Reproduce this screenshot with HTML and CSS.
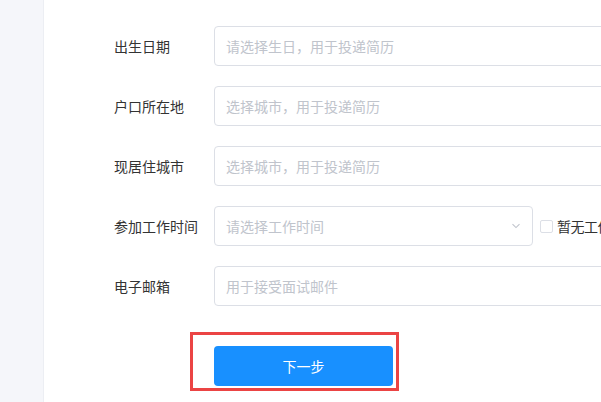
FILE: index.html
```html
<!DOCTYPE html>
<html lang="zh-CN">
<head>
<meta charset="utf-8">
<title>表单</title>
<link rel="stylesheet" href="styles.css">
</head>
<body>
<div class="page">
  <aside class="sidebar"></aside>
  <main class="main">
    <div class="form-row">
      <div class="label">出生日期</div>
      <div class="input">请选择生日，用于投递简历</div>
    </div>
    <div class="form-row">
      <div class="label">户口所在地</div>
      <div class="input">选择城市，用于投递简历</div>
    </div>
    <div class="form-row">
      <div class="label">现居住城市</div>
      <div class="input">选择城市，用于投递简历</div>
    </div>
    <div class="form-row">
      <div class="label">参加工作时间</div>
      <div class="input select">
        <span>请选择工作时间</span>
        <svg class="chevron" width="10" height="6" viewBox="0 0 10 6"><path d="M1.5 1.2 L5 4.6 L8.5 1.2" fill="none" stroke="#c0c4cc" stroke-width="1.1"/></svg>
      </div>
      <span class="checkbox"></span>
      <span class="check-label">暂无工作经验</span>
    </div>
    <div class="form-row">
      <div class="label">电子邮箱</div>
      <div class="input">用于接受面试邮件</div>
    </div>
    <div class="actions">
      <div class="btn-wrap">
        <button class="btn">下一步</button>
        <div class="highlight"></div>
      </div>
    </div>
  </main>
</div>
</body>
</html>
```

FILE: styles.css
```css
html, body {
  margin: 0;
  padding: 0;
  background: #ffffff;
}
body {
  font-family: "Noto Sans CJK SC", "Noto Sans", sans-serif;
  font-size: 14px;
}
.page {
  display: flex;
  width: 601px;
  height: 402px;
  overflow: hidden;
}
.sidebar {
  width: 43px;
  flex: none;
  background: #f5f6fa;
  border-right: 1px solid #eceef3;
}
.main {
  flex: 1;
  padding: 26px 0 0 70px;
  overflow: hidden;
}
.form-row {
  display: flex;
  align-items: center;
  height: 40px;
  margin-bottom: 20px;
  white-space: nowrap;
}
.label {
  width: 100px;
  flex: none;
  color: #333333;
  font-size: 14px;
  line-height: 20px;
}
.input {
  flex: none;
  width: 420px;
  height: 40px;
  box-sizing: border-box;
  border: 1px solid #dcdfe6;
  border-radius: 4px;
  padding-left: 11px;
  display: flex;
  align-items: center;
  color: #c0c4cc;
  font-size: 14px;
}
.select {
  width: 319px;
  justify-content: space-between;
  padding-right: 11px;
}
.chevron {
  display: block;
}
.checkbox {
  flex: none;
  width: 13px;
  height: 13px;
  box-sizing: border-box;
  border: 1px solid #dcdfe6;
  border-radius: 2px;
  margin-left: 7px;
}
.check-label {
  margin-left: 4px;
  color: #333333;
  font-size: 14px;
  letter-spacing: -0.5px;
}
.actions {
  margin-top: 40px;
  padding-left: 100px;
}
.btn-wrap {
  position: relative;
  width: 179px;
  height: 40px;
}
.btn {
  width: 179px;
  height: 40px;
  border: none;
  border-radius: 4px;
  background: #1890ff;
  color: #ffffff;
  font-family: "Noto Sans CJK SC", "Noto Sans", sans-serif;
  font-size: 14px;
  padding: 0;
}
.highlight {
  position: absolute;
  left: -24px;
  top: -14px;
  width: 209px;
  height: 59px;
  box-sizing: border-box;
  border: 3px solid #eb4444;
  pointer-events: none;
}
```
